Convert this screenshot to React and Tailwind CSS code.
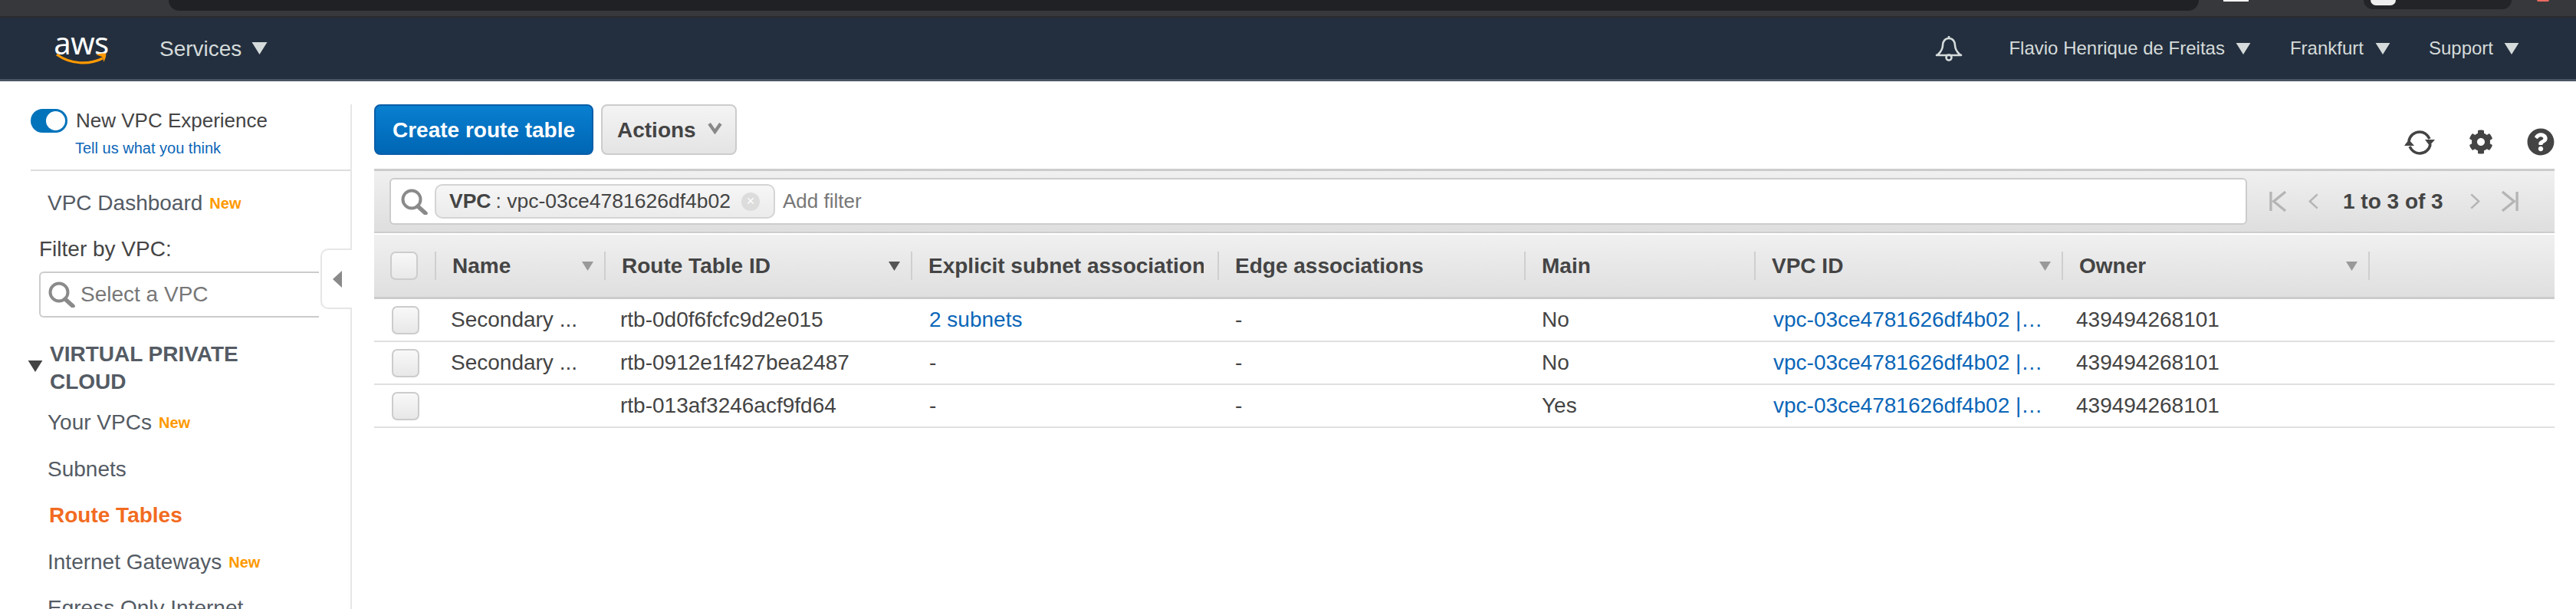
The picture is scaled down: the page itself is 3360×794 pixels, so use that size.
import React from "react";
import { FaCog, FaQuestionCircle } from "react-icons/fa";

const GRID = "grid grid-cols-[79px_221px_400px_400px_400px_300px_401px_400px_1fr]";

const Tri = ({ className }) => (
  <svg viewBox="0 0 20 16" className={className}>
    <polygon points="0,0 20,0 10,16" fill="currentColor" />
  </svg>
);

const Magnifier = ({ className }) => (
  <svg viewBox="0 0 36 34" className={className} fill="none">
    <circle cx="15" cy="14" r="11.5" stroke="#8a8a8a" strokeWidth="4" />
    <line x1="23" y1="23" x2="33" y2="32" stroke="#8a8a8a" strokeWidth="5.5" strokeLinecap="round" />
  </svg>
);

const Bell = () => (
  <svg viewBox="0 0 36 34" className="w-[36px] h-[34px] text-[#d5dbdb]" fill="none" stroke="currentColor" strokeWidth="2.6">
    <path d="M18 1v3" />
    <path d="M4 25c4-4 6-7 6-12 0-5 3-9 8-9s8 4 8 9c0 5 2 8 6 12l2 1H2z" strokeLinejoin="round" />
    <circle cx="18" cy="29" r="3.5" />
  </svg>
);

const Refresh = () => (
  <svg viewBox="0 0 44 34" className="w-[44px] h-[34px] text-[#444]" fill="none">
    <path d="M8 15C9 8 15 3 22 3c6 0 10 3 13 9" stroke="currentColor" strokeWidth="3.6" />
    <polygon points="29,13 42,13 35,21" fill="currentColor" />
    <path d="M36 19c-1 7-7 12-14 12-6 0-10-3-13-9" stroke="currentColor" strokeWidth="3.6" />
    <polygon points="2,21 15,21 8,13" fill="currentColor" />
  </svg>
);

const PagerIcon = ({ d, className }) => (
  <svg viewBox="0 0 24 28" className={className} fill="none" stroke="#b5b5b5" strokeWidth="3.5">
    <path d={d} />
  </svg>
);

const NewTag = () => (
  <span className="ml-[9px] text-[20px] font-bold text-[#ff9900]">New</span>
);

const NavItem = ({ label, isNew, active }) => (
  <div className={`h-[60.5px] flex items-center whitespace-nowrap ${active ? "ml-[64px] text-[#f26b21] font-bold" : "ml-[62px] text-[#545b64]"}`}>
    {label}
    {isNew && <NewTag />}
  </div>
);

const HeaderCell = ({ label, sort, dark }) => (
  <div className="h-[37px] border-l-2 border-[#cfcfcf] pl-[21px] pr-[14px] flex items-center justify-between min-w-0">
    <span className="font-bold text-[#444] whitespace-nowrap overflow-hidden mr-[4px]">{label}</span>
    {sort && <Tri className={`w-[15px] h-[12px] shrink-0 ${dark ? "text-[#555]" : "text-[#999]"}`} />}
  </div>
);

const CheckBox = () => (
  <div className="w-[36px] h-[37px] rounded-[7px] border-2 border-[#cccccc] bg-gradient-to-b from-[#f8f8f8] to-[#e8e8e8]" />
);

const Cell = ({ children, link, className = "pl-[21px]" }) => (
  <div className={`${className} whitespace-nowrap ${link ? "text-[#0b66b8]" : "text-[#444]"}`}>{children}</div>
);

const rows = [
  { name: "Secondary ...", id: "rtb-0d0f6fcfc9d2e015", subnets: "2 subnets", main: "No" },
  { name: "Secondary ...", id: "rtb-0912e1f427bea2487", subnets: "-", main: "No" },
  { name: "", id: "rtb-013af3246acf9fd64", subnets: "-", main: "Yes" },
];

export default function App() {
  return (
    <div className="w-[3360px] h-[794px] overflow-hidden bg-white font-['Liberation_Sans',Arial,sans-serif] text-[28px]">
      {/* browser strip */}
      <div className="h-[23px] bg-[#37383b] border-b-2 border-[#2b2c2e] flex items-start">
        <div className="ml-[220px] w-[2648px] h-[14px] bg-[#202124] rounded-b-[14px]" />
        <div className="ml-[32px] w-[33px] h-[2px] bg-white" />
        <div className="ml-[150px] w-[193px] h-[12px] bg-[#232427] rounded-b-[12px] pl-[9px]">
          <div className="w-[33px] h-[7px] bg-[#eeeeee] rounded-b-full" />
        </div>
        <div className="ml-[33px] w-[16px] h-[2px] bg-[#ee6b60] rounded-b-full" />
      </div>

      {/* aws nav */}
      <div className="h-[83px] bg-[#232f3e] border-b-[3px] border-[#4a5563] flex items-center text-[#d5dbdb] pr-[74px]">
        <div className="ml-[73px] w-[66px] flex flex-col items-center">
          <span className="font-['Noto_Sans',sans-serif] text-[40px] leading-[26px] h-[26px] text-white tracking-[-0.5px]">aws</span>
          <svg viewBox="0 0 66 15" className="w-[66px] h-[15px]">
            <path d="M1 2c18 13 42 14 60 5" fill="none" stroke="#ff9900" strokeWidth="3.2" />
            <path d="M52 2c5-1 12-2 13-1 1 2-1 8-3 11 0-4-1-6-2-7z" fill="#ff9900" />
          </svg>
        </div>
        <span className="ml-[69px] pt-[1px]">Services</span>
        <Tri className="ml-[13px] w-[21px] h-[16px]" />
        <div className="ml-auto flex items-center text-[24px]">
          <Bell />
          <span className="ml-[60px]">Flavio Henrique de Freitas</span>
          <Tri className="ml-[14px] w-[20px] h-[15px]" />
          <span className="ml-[51px]">Frankfurt</span>
          <Tri className="ml-[15px] w-[20px] h-[15px]" />
          <span className="ml-[50px]">Support</span>
          <Tri className="ml-[14px] w-[20px] h-[15px]" />
        </div>
      </div>

      <div className="flex">
        {/* sidebar */}
        <div className="relative w-[459px] shrink-0 mt-[30px] h-[658px] border-r-2 border-[#e6e6e6]">
          <div className="ml-[40px] mt-[6px] h-[31px] flex items-center text-[26px] text-[#444]">
            <div className="w-[48px] h-[31px] rounded-full bg-[#0073bb] flex items-center justify-end pr-[3px]">
              <div className="w-[25px] h-[25px] rounded-full bg-white" />
            </div>
            <span className="ml-[11px]">New VPC Experience</span>
          </div>
          <div className="ml-[98px] mt-[8px] h-[24px] leading-[24px] text-[20px] text-[#0b66b8]">Tell us what you think</div>
          <div className="ml-[40px] mt-[16px] border-t-2 border-[#dddddd]" />
          <div className="ml-[62px] mt-[26px] h-[32px] flex items-center text-[#545b64]">
            VPC Dashboard
            <NewTag />
          </div>
          <div className="ml-[51px] mt-[28px] h-[32px] flex items-center text-[#444]">Filter by VPC:</div>
          <div className="ml-[51px] mt-[13px] w-[365px] h-[60px] border-2 border-r-0 border-[#cccccc] rounded-l-[6px] flex items-center pl-[9px]">
            <Magnifier className="w-[36px] h-[34px]" />
            <span className="ml-[7px] text-[#777]">Select a VPC</span>
          </div>
          <div className="mt-[30px] flex font-bold text-[#545b64] leading-[36px]">
            <Tri className="ml-[36px] mt-[26px] w-[20px] h-[15px] text-[#444]" />
            <div className="ml-[9px]">
              VIRTUAL PRIVATE
              <br />
              CLOUD
            </div>
          </div>
          <div className="mt-[5px]">
            <NavItem label="Your VPCs" isNew />
            <NavItem label="Subnets" />
            <NavItem label="Route Tables" active />
            <NavItem label="Internet Gateways" isNew />
            <NavItem label="Egress Only Internet" />
          </div>
          {/* collapse tab */}
          <div className="absolute top-[188px] right-[-2px] w-[41px] h-[79px] bg-white border-2 border-r-0 border-[#e6e6e6] rounded-l-[10px] flex items-center pl-[14px]">
            <svg viewBox="0 0 12 22" className="w-[12px] h-[22px]">
              <polygon points="12,0 12,22 0,11" fill="#8a8a8a" />
            </svg>
          </div>
        </div>

        {/* main */}
        <div className="flex-1 min-w-0 pl-[29px] pr-[28px] pt-[30px]">
          <div className="h-[84px] flex items-start">
            <button className="w-[286px] h-[66px] pt-[2px] rounded-[8px] border-2 border-[#0a5ea8] bg-gradient-to-b from-[#0a7fd0] to-[#0066b4] text-white font-bold">
              Create route table
            </button>
            <button className="ml-[10px] w-[177px] h-[66px] pt-[2px] pl-[19px] rounded-[8px] border-2 border-[#cccccc] bg-gradient-to-b from-[#f4f4f4] to-[#e4e4e4] text-[#444] font-bold flex items-center">
              Actions
              <svg viewBox="0 0 18 14" className="ml-[15px] mb-[6px] w-[19px] h-[15px]" fill="none" stroke="#888" strokeWidth="4">
                <path d="M2 1l7 10 7-10" />
              </svg>
            </button>
            <div className="ml-auto self-end mb-[17px] flex items-end">
              <Refresh />
              <FaCog className="ml-[42px] mb-[2px] text-[32px] text-[#444]" />
              <FaQuestionCircle className="ml-[44px] text-[36px] text-[#444]" />
            </div>
          </div>

          {/* filter bar */}
          <div className="h-[84px] border-t-[3px] border-b-2 border-[#cccccc] bg-gradient-to-b from-[#f0f0f0] to-[#dedede] flex items-center pl-[20px]">
            <div className="w-[2423px] h-[61px] shrink-0 rounded-[6px] border-2 border-[#cccccc] bg-white flex items-center pl-[12px]">
              <Magnifier className="w-[36px] h-[34px]" />
              <div className="ml-[9px] w-[444px] h-[45px] rounded-[10px] border-2 border-[#d4d4d4] bg-gradient-to-b from-[#f6f6f6] to-[#ebebeb] flex items-center pl-[17px] text-[26.5px] text-[#444]">
                <span className="font-bold">VPC</span>
                <span className="ml-[6px]">: vpc-03ce4781626df4b02</span>
                <span className="ml-[14px] w-[24px] h-[24px] rounded-full bg-[#dcdcdc] text-white text-[18px] flex items-center justify-center">×</span>
              </div>
              <span className="ml-[10px] text-[#777] text-[26px]">Add filter</span>
            </div>
            <div className="ml-[29px] flex items-center">
              <PagerIcon d="M2 1v26M22 1L6 14l16 13" className="w-[23px] h-[27px]" />
              <PagerIcon d="M18 1L4 14l14 13" className="ml-[27px] w-[17px] h-[27px]" />
              <span className="ml-[29px] font-bold text-[#444] whitespace-nowrap">1 to 3 of 3</span>
              <PagerIcon d="M6 1l14 13L6 27" className="ml-[32px] w-[17px] h-[27px]" />
              <PagerIcon d="M22 1v26M2 1l16 13L2 27" className="ml-[26px] w-[23px] h-[27px]" />
            </div>
          </div>

          {/* table header */}
          <div className={`${GRID} mt-[2px] h-[84px] border-b-[3px] border-[#cccccc] bg-gradient-to-b from-[#f0f0f0] to-[#dfdfdf] items-center`}>
            <div className="pl-[21px]">
              <CheckBox />
            </div>
            <HeaderCell label="Name" sort />
            <HeaderCell label="Route Table ID" sort dark />
            <HeaderCell label="Explicit subnet associations" />
            <HeaderCell label="Edge associations" />
            <HeaderCell label="Main" />
            <HeaderCell label="VPC ID" sort />
            <HeaderCell label="Owner" sort />
            <div className="h-[37px] border-l-2 border-[#cfcfcf]" />
          </div>

          {/* rows */}
          {rows.map((row) => (
            <div key={row.id} className={`${GRID} h-[56px] border-b-2 border-[#e0e0e0] items-center`}>
              <div className="pl-[23px]">
                <CheckBox />
              </div>
              <Cell>{row.name}</Cell>
              <Cell>{row.id}</Cell>
              <Cell link={row.subnets !== "-"} className="pl-[24px]">{row.subnets}</Cell>
              <Cell className="pl-[23px]">-</Cell>
              <Cell className="pl-[23px]">{row.main}</Cell>
              <Cell link className="pl-[25px]">vpc-03ce4781626df4b02 |…</Cell>
              <Cell className="pl-[19px]">439494268101</Cell>
              <div />
            </div>
          ))}
        </div>
      </div>
    </div>
  );
}
